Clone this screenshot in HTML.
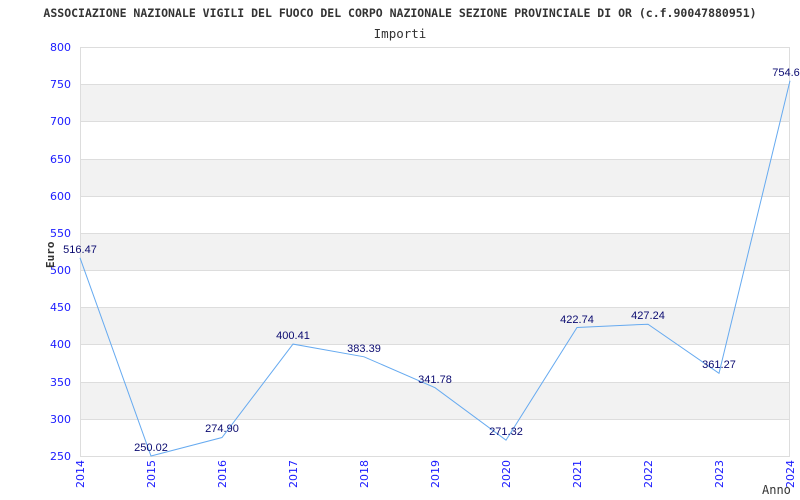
<!DOCTYPE html>
<html><head><meta charset="utf-8"><style>
html,body{margin:0;padding:0;background:#fff;width:800px;height:500px;overflow:hidden}
svg{display:block}
.ax{font-family:"DejaVu Sans","Liberation Sans",sans-serif;font-size:11px;fill:#1a1aff}
.dl{font-family:"Liberation Sans",sans-serif;font-size:11px;fill:#0a0a70}
.mono{font-family:"DejaVu Sans Mono","Liberation Mono",monospace}
</style></head><body>
<svg width="800" height="500" viewBox="0 0 800 500">
<text x="400" y="17" text-anchor="middle" class="mono" font-size="11.5" font-weight="bold" fill="#333">ASSOCIAZIONE NAZIONALE VIGILI DEL FUOCO DEL CORPO NAZIONALE SEZIONE PROVINCIALE DI OR (c.f.90047880951)</text>
<text x="400" y="38" text-anchor="middle" class="mono" font-size="12.5" fill="#333">Importi</text>
<g fill="#f2f2f2">
<rect x="80" y="84" width="710" height="37"/>
<rect x="80" y="159" width="710" height="37"/>
<rect x="80" y="233" width="710" height="37"/>
<rect x="80" y="307" width="710" height="37"/>
<rect x="80" y="382" width="710" height="37"/>
</g>
<g stroke="#dddddd" stroke-width="1">
<line x1="80" y1="84.5" x2="790" y2="84.5"/><line x1="80" y1="121.5" x2="790" y2="121.5"/>
<line x1="80" y1="159.5" x2="790" y2="159.5"/><line x1="80" y1="196.5" x2="790" y2="196.5"/>
<line x1="80" y1="233.5" x2="790" y2="233.5"/><line x1="80" y1="270.5" x2="790" y2="270.5"/>
<line x1="80" y1="307.5" x2="790" y2="307.5"/><line x1="80" y1="344.5" x2="790" y2="344.5"/>
<line x1="80" y1="382.5" x2="790" y2="382.5"/><line x1="80" y1="419.5" x2="790" y2="419.5"/>
</g>
<rect x="80.5" y="47.5" width="709" height="409" fill="none" stroke="#dddddd"/>
<g class="ax" text-anchor="end">
<text x="71" y="51">800</text><text x="71" y="88">750</text><text x="71" y="125">700</text>
<text x="71" y="163">650</text><text x="71" y="200">600</text><text x="71" y="237">550</text>
<text x="71" y="274">500</text><text x="71" y="311">450</text><text x="71" y="348">400</text>
<text x="71" y="386">350</text><text x="71" y="423">300</text><text x="71" y="460">250</text>
</g>
<g class="ax" text-anchor="end">
<text transform="translate(84,460) rotate(-90)">2014</text>
<text transform="translate(155,460) rotate(-90)">2015</text>
<text transform="translate(226,460) rotate(-90)">2016</text>
<text transform="translate(297,460) rotate(-90)">2017</text>
<text transform="translate(368,460) rotate(-90)">2018</text>
<text transform="translate(439,460) rotate(-90)">2019</text>
<text transform="translate(510,460) rotate(-90)">2020</text>
<text transform="translate(581,460) rotate(-90)">2021</text>
<text transform="translate(652,460) rotate(-90)">2022</text>
<text transform="translate(723,460) rotate(-90)">2023</text>
<text transform="translate(794,460) rotate(-90)">2024</text>
</g>
<text x="762" y="494" class="mono" font-size="12" fill="#333">Anno</text>
<text transform="translate(54,268) rotate(-90)" class="mono" font-size="11" font-weight="bold" fill="#333">Euro</text>
<polyline fill="none" stroke="#66aaf0" stroke-width="1" points="80,257.8 151,456 222,437.5 293,344.1 364,356.8 435,387.7 506,440.2 577,327.5 648,324.2 719,373.3 790,80.8"/>
<g class="dl" text-anchor="middle">
<text x="80" y="253">516.47</text>
<text x="151" y="451">250.02</text>
<text x="222" y="432">274.90</text>
<text x="293" y="339">400.41</text>
<text x="364" y="352">383.39</text>
<text x="435" y="383">341.78</text>
<text x="506" y="435">271.32</text>
<text x="577" y="323">422.74</text>
<text x="648" y="319">427.24</text>
<text x="719" y="368">361.27</text>
<text x="786" y="76">754.6</text>
</g>
</svg>
</body></html>
